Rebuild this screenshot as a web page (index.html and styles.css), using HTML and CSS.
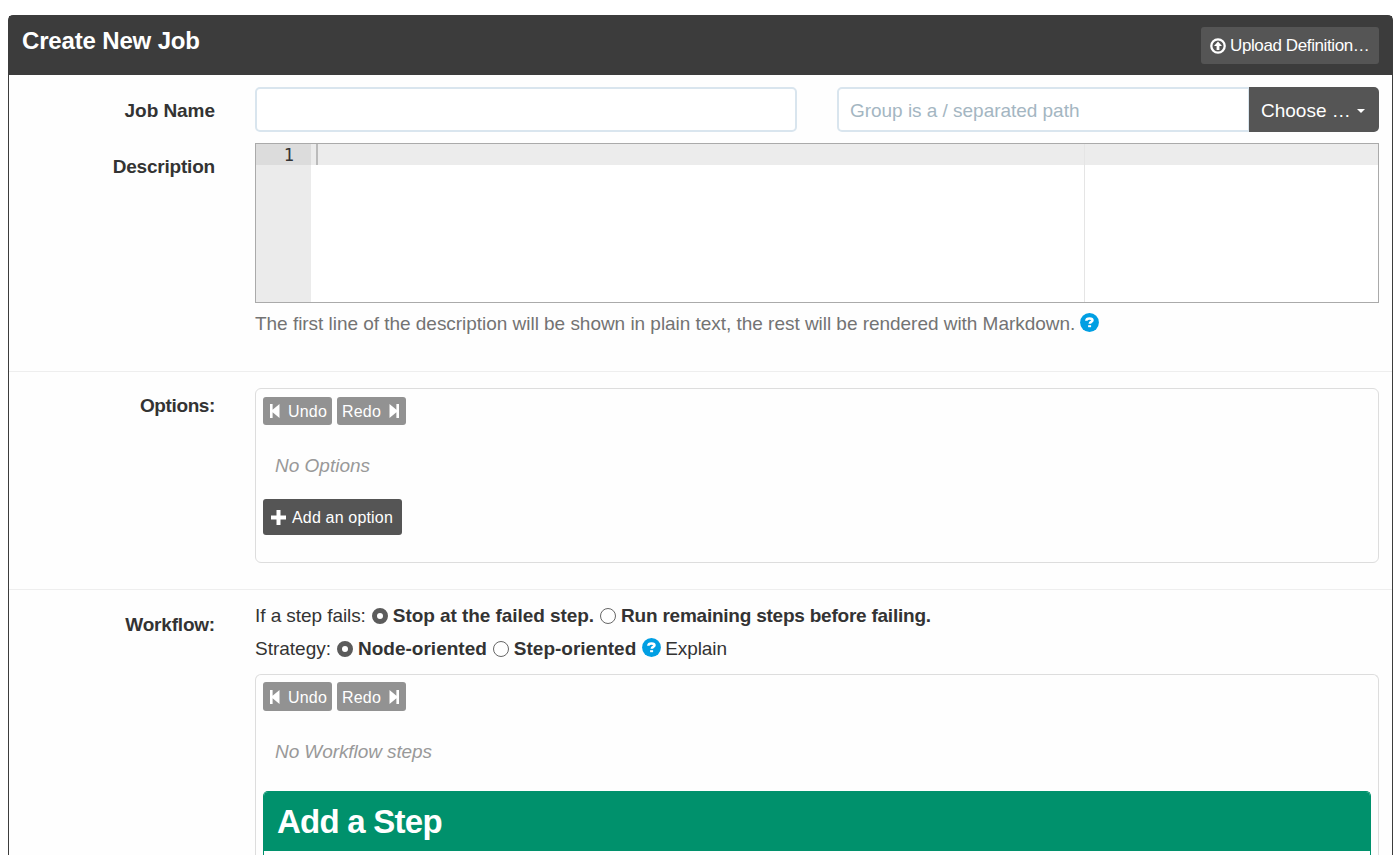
FILE: index.html
```html
<!DOCTYPE html>
<html lang="en">
<head>
<meta charset="utf-8">
<title>Create New Job</title>
<link rel="stylesheet" href="styles.css">
</head>
<body>
<svg class="defs" width="0" height="0">
  <symbol id="backward" viewBox="0 0 12 16"><path d="M1 1h2.600v5.700L10.500 1v14L3.600 9.300V15H1z"/></symbol>
  <symbol id="forward" viewBox="0 0 12 16"><path d="M11 1H8.400v5.700L1.500 1v14l6.900-5.700V15H11z"/></symbol>
  <symbol id="help" viewBox="0 0 19 19"><circle cx="9.500" cy="9.500" r="9.400" fill="#009fe3"/><path d="M6.300 7.700C6.400 6 7.700 5.400 9.500 5.400c1.900 0 3 .7 3 1.900 0 1.800-2.700 1.500-2.700 3.400" fill="none" stroke="#fff" stroke-width="2.500"/><path d="M8.100 12.200h3v2h-3z" fill="#fff"/></symbol>
</svg>
<form class="panel">
  <header class="panel-head">
    <h1 class="title">Create New Job</h1>
    <button type="button" class="btn upload"><svg class="upload-icon" viewBox="0 0 16 16"><circle cx="8" cy="8" r="6.700" fill="none" stroke="#fff" stroke-width="2.300"/><path d="M8 3.500 12 8H9.400v4H6.600V8H4z" fill="#fff"/></svg><span class="t-upload">Upload Definition…</span></button>
  </header>
  <section class="section details">
    <div class="row">
      <label class="label name-label">Job Name</label>
      <div class="fields">
        <input class="input job-name" type="text">
        <div class="group">
          <input class="input group-path" type="text" placeholder="Group is a / separated path">
          <button type="button" class="btn choose"><span class="t-choose">Choose …</span><span class="caret"></span></button>
        </div>
      </div>
    </div>
    <div class="row desc-row">
      <label class="label desc-label">Description</label>
      <div class="content">
        <div class="editor">
          <div class="gutter"><div class="line-no">1</div></div>
          <div class="code"><div class="active-line"><span class="cursor"></span></div></div>
          <div class="margin"><div class="active-line"></div></div>
        </div>
        <p class="help"><span class="t-help">The first line of the description will be shown in plain text, the rest will be rendered with Markdown.</span><svg class="help-icon"><use href="#help"/></svg></p>
      </div>
    </div>
  </section>
  <section class="section options">
    <div class="row">
      <label class="label options-label">Options:</label>
      <div class="content box options-box">
        <div class="history">
          <button type="button" class="btn small"><svg class="step-icon"><use href="#backward"/></svg><span class="t-undo">Undo</span></button>
          <button type="button" class="btn small"><span class="t-redo">Redo</span><svg class="step-icon"><use href="#forward"/></svg></button>
        </div>
        <p class="empty"><span class="t-noopt">No Options</span></p>
        <button type="button" class="btn add"><svg class="plus-icon" viewBox="0 0 15 15"><path d="M5.500 0h4v5.500H15v4H9.500V15h-4V9.500H0v-4h5.500z" fill="#fff"/></svg><span class="t-add">Add an option</span></button>
      </div>
    </div>
  </section>
  <section class="section workflow">
    <div class="row">
      <label class="label workflow-label">Workflow:</label>
      <div class="content">
        <div class="choices">
          <span class="t-fails">If a step fails:</span><span class="radio on"></span><b class="t-stop">Stop at the failed step.</b><span class="radio"></span><b class="t-run">Run remaining steps before failing.</b>
        </div>
        <div class="choices">
          <span class="t-strategy">Strategy:</span><span class="radio on"></span><b class="t-node">Node-oriented</b><span class="radio"></span><b class="t-step">Step-oriented</b><svg class="help-icon inline"><use href="#help"/></svg><span class="t-explain">Explain</span>
        </div>
        <div class="box workflow-box">
          <div class="history tall">
            <button type="button" class="btn small"><svg class="step-icon"><use href="#backward"/></svg><span class="t-undo">Undo</span></button>
            <button type="button" class="btn small"><span class="t-redo">Redo</span><svg class="step-icon"><use href="#forward"/></svg></button>
          </div>
          <p class="empty"><span class="t-nowf">No Workflow steps</span></p>
          <div class="step-panel"><h2 class="step-head"><span class="t-addstep">Add a Step</span></h2></div>
        </div>
      </div>
    </div>
  </section>
</form>
</body>
</html>
```
FILE: styles.css
```css
* { box-sizing: border-box; }
html { overflow: hidden; }
body { margin: 0; padding: 15px 4px 0 8px; height: 855px; overflow: hidden; background: #fff; color: #333; font: 19px/22px "Liberation Sans", Arial, sans-serif; white-space: nowrap; }
.defs { display: block; position: absolute; }
h1, h2, p { margin: 0; }
button, input { font: inherit; }
.panel { height: 840px; border: 1px solid #3c3c3c; border-bottom: 0; border-radius: 5px 5px 0 0; background: #fefefe; }
.panel-head { display: flex; justify-content: space-between; height: 59px; padding: 11px 13px 0; background: #3c3c3c; color: #fff; }
.title { font-size: 24px; line-height: 28px; font-weight: bold; letter-spacing: -0.16px; }
.btn { display: flex; align-items: center; border: 0; margin: 0; padding: 0; border-radius: 3px; background: #555; color: #fff; }
.upload { width: 178px; height: 37px; padding-left: 9px; gap: 4px; font-size: 17px; }
.upload-icon { width: 16px; height: 16px; }
.t-upload { letter-spacing: -0.39px; }
.section { border-bottom: 1px solid #eee; }
.details { height: 297px; padding-top: 12px; }
.row { display: flex; padding-right: 13px; }
.label { flex: none; width: 246px; padding-right: 40px; text-align: right; font-weight: bold; letter-spacing: -0.2px; }
.name-label { padding-top: 13px; letter-spacing: -0.05px; }
.desc-label { padding-top: 13px; }
.fields { flex: 1; display: flex; justify-content: space-between; }
.content { flex: 1; min-width: 0; }
.input { height: 45px; border: 2px solid #d9e5ee; border-radius: 5px; background: #fff; padding: 2px 11px 0; outline: 0; }
.job-name { width: 542px; }
.group { display: flex; }
.group-path { width: 412px; border-right: 1px solid #d9e5ee; border-radius: 5px 0 0 5px; }
.group-path::placeholder { color: #a4b6c2; opacity: 1; letter-spacing: -0.03px; }
.choose { width: 130px; height: 45px; padding-left: 12px; gap: 6px; border-radius: 0 5px 5px 0; }
.t-choose { padding-top: 2px; }
.caret { border: 4px solid transparent; border-top-color: #fff; border-bottom: 0; margin-top: 3px; }
.desc-row { margin-top: 11px; }
.editor { display: flex; height: 160px; border: 1px solid #aaa; background: #fff; }
.gutter { width: 55px; background: #ebebeb; }
.line-no { height: 21px; padding-right: 17px; background: #dcdcdc; text-align: right; font: 17px/22px "DejaVu Sans Mono", "Liberation Mono", monospace; }
.code { width: 774px; border-right: 1px solid #e5e5e5; }
.margin { flex: 1; }
.active-line { height: 21px; padding-left: 5px; background: #ececec; }
.cursor { display: block; width: 2px; height: 21px; background: #bbb; }
.help { display: flex; align-items: center; margin-top: 10px; color: #737373; }
.t-help { letter-spacing: -0.034px; }
.help-icon { width: 19px; height: 19px; margin: -4px 0 0 5px; }
.help-icon.inline { margin: -2px 4px 0 6px; }
.options { height: 218px; padding-top: 16px; }
.options-label { padding-top: 7px; letter-spacing: -0.38px; }
.box { border: 1px solid #ddd; border-radius: 6px; padding: 8px 7px 0; }
.options-box { height: 175px; }
.history { display: flex; gap: 5px; height: 28px; }
.history.tall { height: 29px; margin-top: -1px; }
.small { width: 69px; height: 100%; padding: 0 5px; justify-content: space-between; background: #929292; font-size: 16px; }
.small span { padding-top: 2px; letter-spacing: 0.2px; }
.step-icon { width: 12px; height: 16px; margin: 0 1px; fill: #fff; }
.empty { height: 22px; margin: 30px 0 0 12px; color: #999; font-style: italic; }
.t-nowf { letter-spacing: -0.08px; }
.add { width: 139px; height: 36px; margin-top: 22px; padding-left: 8px; gap: 6px; font-size: 16px; }
.t-add { padding-top: 2px; letter-spacing: 0.17px; }
.plus-icon { width: 15px; height: 15px; }
.workflow { padding-top: 9px; border-bottom: 0; }
.workflow-label { padding-top: 15px; }
.choices { display: flex; align-items: center; height: 33px; }
.radio { flex: none; width: 16px; height: 16px; margin: 0 5px 0 6px; border: 1px solid #666; border-radius: 50%; background: #fff; }
.radio.on { border: 5px solid #5b5b5b; }
.t-fails { letter-spacing: -0.07px; }
.t-stop { letter-spacing: -0.06px; }
.t-run { letter-spacing: -0.23px; }
.t-explain { letter-spacing: -0.1px; }
.workflow-box { height: 181px; margin-top: 9px; border-bottom: 0; border-radius: 6px 6px 0 0; }
.step-panel { height: 64px; margin-top: 28px; border: 1px solid #00916c; border-bottom: 0; border-radius: 5px 5px 0 0; overflow: hidden; }
.step-head { height: 59px; padding-left: 13px; background: #00916c; color: #fff; font-size: 33px; line-height: 60px; font-weight: bold; letter-spacing: -0.75px; }
```
